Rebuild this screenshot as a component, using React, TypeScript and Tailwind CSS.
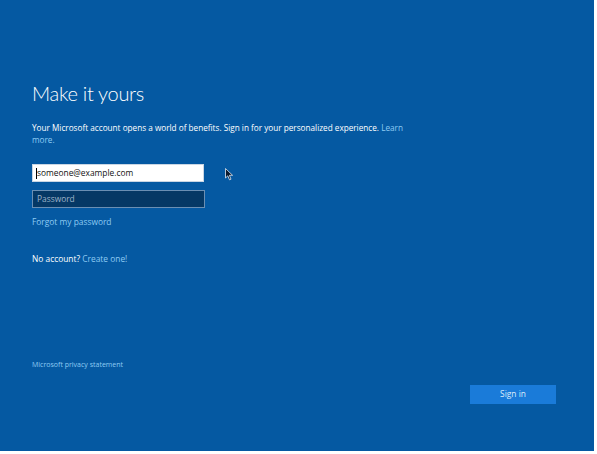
import React from 'react';

function Cursor() {
  return (
    <svg className="absolute left-[225px] top-[168px]" width="9" height="13" viewBox="0 0 9 13">
      <path d="M0.5 0.5 L0.5 10 L2.8 7.8 L4.5 11.8 L6 11.2 L4.4 7.3 L7.6 7.3 Z" fill="#0b1a2e" stroke="#dfe8f3" strokeWidth="0.8" />
    </svg>
  );
}

export default function App() {
  return (
    <div className="w-[597px] h-[454px] bg-white overflow-hidden" style={{ fontFamily: '"Open Sans", "Noto Sans", sans-serif' }}>
      <div className="relative w-[594px] h-[451px] bg-[#0559a2] pl-[32px] pt-[78px] flex flex-col">
        <h1 className="text-[20px] font-light leading-[30px] text-white tracking-[-0.3px]" style={{ fontFamily: 'Lato, "Open Sans", sans-serif' }}>
          Make it yours
        </h1>

        <p className="mt-[14px] w-[380px] text-[8.2px] leading-[12px] text-white">
          Your Microsoft account opens a world of benefits. Sign in for your personalized experience.{' '}
          <span className="text-[#8ecbf3]">Learn</span> <span className="text-[#8ecbf3]">more.</span>
        </p>

        {/* Email */}
        <div className="mt-[18px] w-[172px] h-[18px] bg-white border border-[#c9d6e4] flex items-center pl-[3px]">
          <span className="w-px h-[11px] bg-black" />
          <span className="text-[8.4px] text-[#111]">someone@example.com</span>
        </div>

        {/* Password */}
        <div className="mt-[8px] w-[173px] h-[18px] bg-[#053865] border border-[#6b8fb3] flex items-center pl-[4px]">
          <span className="text-[8.4px] text-[#9db3c9]">Password</span>
        </div>

        <div className="mt-[8px] text-[8.4px] leading-[12px] text-[#8ecbf3]">Forgot my password</div>

        <div className="mt-[25px] text-[8.4px] leading-[12px] text-white">
          No account? <span className="text-[#8ecbf3]">Create one!</span>
        </div>

        <div className="mt-auto mb-[47px] flex items-end justify-between pr-[38px]">
          <div className="mb-[34px] text-[7px] leading-[10px] text-[#8ecbf3]">Microsoft privacy statement</div>
          <div className="w-[86px] h-[19px] bg-[#1a7bd9] flex items-center justify-center text-[8.4px] text-[#dcecfb]">
            Sign in
          </div>
        </div>

        <Cursor />
      </div>
    </div>
  );
}
